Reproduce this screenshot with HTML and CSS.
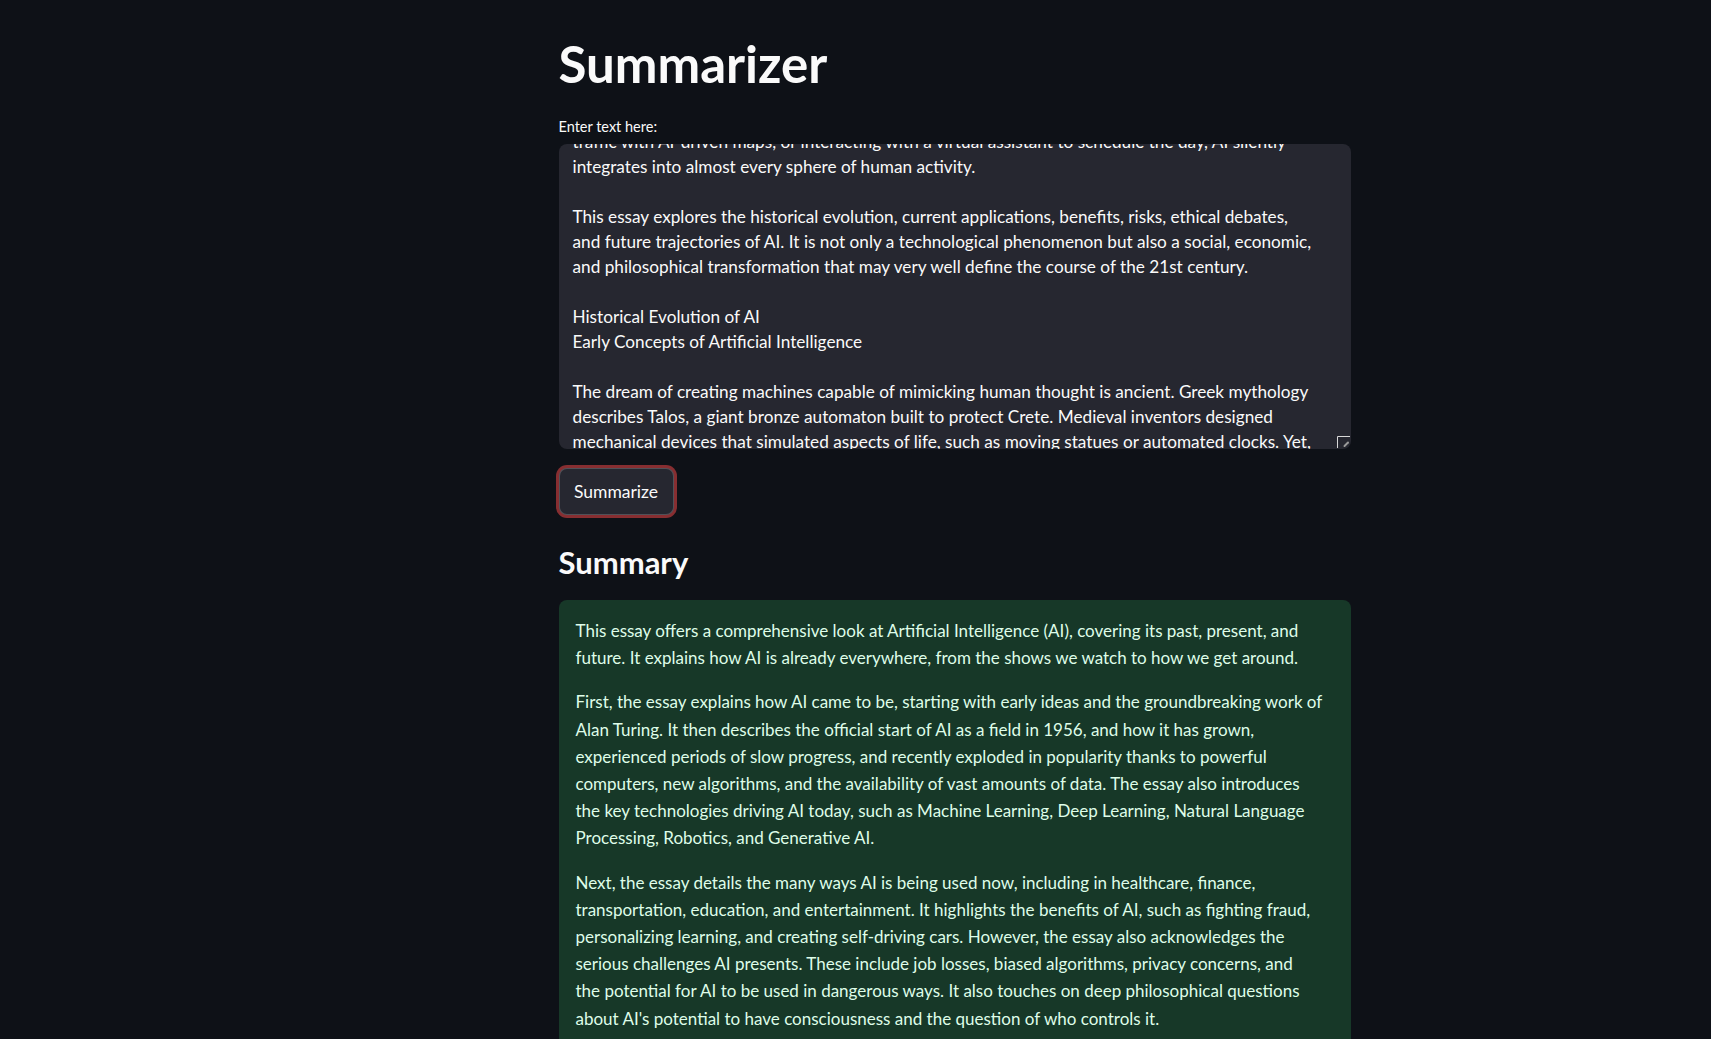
FILE: index.html
```html
<!DOCTYPE html>
<html lang="en">
<head>
<meta charset="utf-8">
<title>Summarizer</title>
<link rel="stylesheet" href="styles.css">
</head>
<body>
<div class="app">
  <main class="main">
    <h1 class="title">Summarizer</h1>
    <div class="field">
      <label class="label">Enter text here:</label>
      <div class="textarea">
        <div class="ta-text">traffic with AI-driven maps, or interacting with a virtual assistant to schedule the day, AI silently
integrates into almost every sphere of human activity.

This essay explores the historical evolution, current applications, benefits, risks, ethical debates,
and future trajectories of AI. It is not only a technological phenomenon but also a social, economic,
and philosophical transformation that may very well define the course of the 21st century.

Historical Evolution of AI
Early Concepts of Artificial Intelligence

The dream of creating machines capable of mimicking human thought is ancient. Greek mythology
describes Talos, a giant bronze automaton built to protect Crete. Medieval inventors designed
mechanical devices that simulated aspects of life, such as moving statues or automated clocks. Yet,
it was not until the twentieth century that the idea became a scientific pursuit.</div>
        <svg class="grip" width="13" height="12" viewBox="0 0 13 12"><path d="M0.5 12V0.5H13" fill="none" stroke="#d8d8d8" stroke-width="1"/><path d="M7.5 10L11 6.5" stroke="#9a9a9a" stroke-width="2" stroke-linecap="round"/></svg>
      </div>
    </div>
    <div class="btn-row"><button class="btn">Summarize</button></div>
    <h2 class="subtitle">Summary</h2>
    <div class="success">
      <p>This essay offers a comprehensive look at Artificial Intelligence (AI), covering its past, present, and<br>future. It explains how AI is already everywhere, from the shows we watch to how we get around.</p>
      <p>First, the essay explains how AI came to be, starting with early ideas and the groundbreaking work of<br>Alan Turing. It then describes the official start of AI as a field in 1956, and how it has grown,<br>experienced periods of slow progress, and recently exploded in popularity thanks to powerful<br>computers, new algorithms, and the availability of vast amounts of data. The essay also introduces<br>the key technologies driving AI today, such as Machine Learning, Deep Learning, Natural Language<br>Processing, Robotics, and Generative AI.</p>
      <p>Next, the essay details the many ways AI is being used now, including in healthcare, finance,<br>transportation, education, and entertainment. It highlights the benefits of AI, such as fighting fraud,<br>personalizing learning, and creating self-driving cars. However, the essay also acknowledges the<br>serious challenges AI presents. These include job losses, biased algorithms, privacy concerns, and<br>the potential for AI to be used in dangerous ways. It also touches on deep philosophical questions<br>about AI's potential to have consciousness and the question of who controls it.</p>
      <p>Finally, the essay looks toward the future, considering how AI might reshape work, society and<br>governance, and stresses the need for responsible development and thoughtful regulation.</p>
    </div>
  </main>
</div>
</body>
</html>
```

FILE: styles.css
```css
html, body {
  margin: 0;
  padding: 0;
  background: #0e1117;
  overflow: hidden;
}
body {
  font-family: "Lato", "Noto Sans", sans-serif;
  color: #fafafa;
}
.app {
  display: flex;
  justify-content: center;
  padding-left: 198px;
}
.main {
  width: 792px;
  padding-top: 34px;
}
.title {
  margin: 0;
  font-size: 51px;
  line-height: 60px;
  font-weight: 700;
  color: #fafafa;
}
.field {
  margin-top: 23px;
  display: flex;
  flex-direction: column;
  gap: 7px;
}
.label {
  font-size: 14.5px;
  line-height: 20px;
  color: #fafafa;
}
.textarea {
  position: relative;
  height: 305px;
  background: #262730;
  border-radius: 8px;
  overflow: hidden;
  padding: 0 14px;
}
.ta-text {
  margin-top: -15px;
  white-space: pre;
  font-size: 17.2px;
  line-height: 25px;
  color: #fafafa;
}
.grip {
  position: absolute;
  right: 1px;
  bottom: 1px;
}
.btn-row {
  margin-top: 19px;
  display: flex;
}
.btn {
  width: 115px;
  height: 47px;
  display: flex;
  align-items: center;
  justify-content: center;
  background: #262730;
  border: 1px solid rgba(250, 250, 250, 0.2);
  border-radius: 8px;
  box-shadow: 0 0 0 3px rgba(255, 75, 75, 0.5);
  color: #fafafa;
  font-family: "Lato", "Noto Sans", sans-serif;
  font-size: 17.5px;
  padding: 0;
}
.subtitle {
  margin: 29px 0 0;
  font-size: 31px;
  line-height: 36px;
  font-weight: 700;
  color: #fafafa;
}
.success {
  margin-top: 20px;
  background: #173828;
  border-radius: 8px;
  padding: 17px 17px 1px;
  color: #dffde9;
  font-size: 17px;
  line-height: 27.2px;
}
.success p {
  margin: 0 0 17px;
}
```
